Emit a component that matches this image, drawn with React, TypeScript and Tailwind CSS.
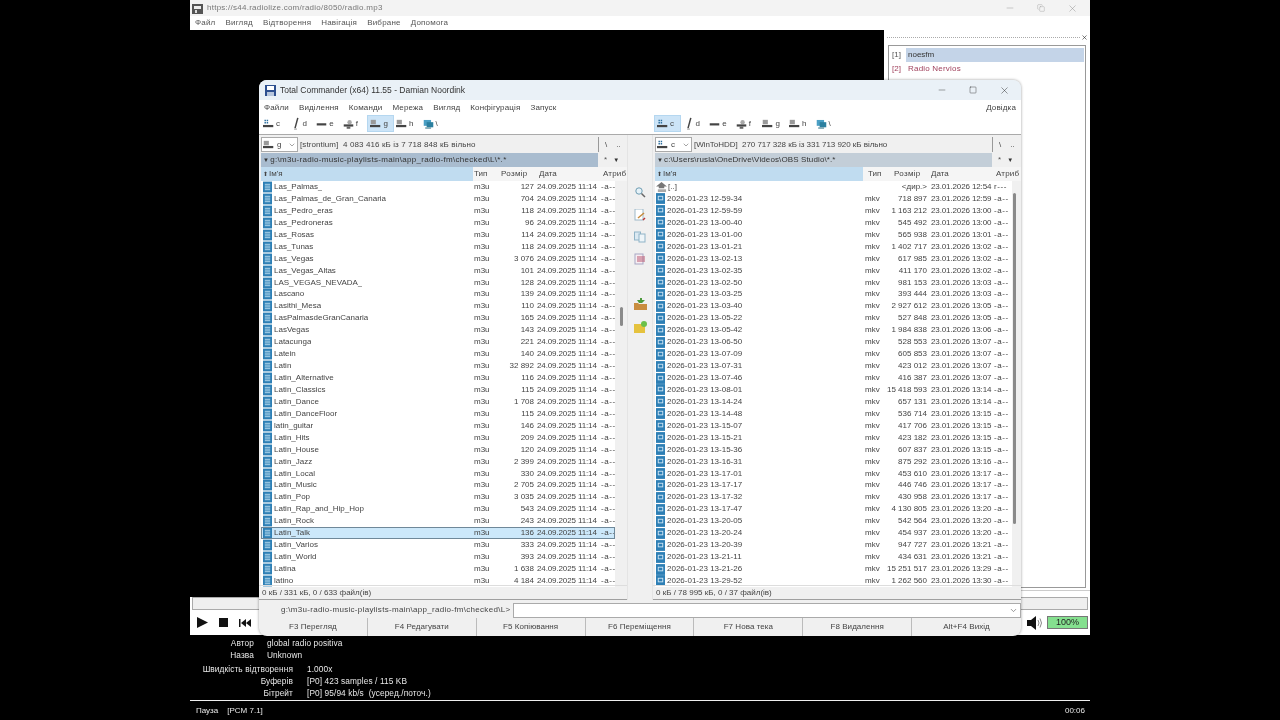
import { Minus, Square, X, ChevronDown, Copy } from "lucide-react";

const LEFT_FILES: [string, string][] = [
  ["Las_Palmas_", "127"],
  ["Las_Palmas_de_Gran_Canaria", "704"],
  ["Las_Pedro_eras", "118"],
  ["Las_Pedroneras", "96"],
  ["Las_Rosas", "114"],
  ["Las_Tunas", "118"],
  ["Las_Vegas", "3 076"],
  ["Las_Vegas_Altas", "101"],
  ["LAS_VEGAS_NEVADA_", "128"],
  ["Lascano", "139"],
  ["Lasithi_Mesa", "110"],
  ["LasPalmasdeGranCanaria", "165"],
  ["LasVegas", "143"],
  ["Latacunga", "221"],
  ["Latein", "140"],
  ["Latin", "32 892"],
  ["Latin_Alternative", "116"],
  ["Latin_Classics", "115"],
  ["Latin_Dance", "1 708"],
  ["Latin_DanceFloor", "115"],
  ["latin_guitar", "146"],
  ["Latin_Hits", "209"],
  ["Latin_House", "120"],
  ["Latin_Jazz", "2 399"],
  ["Latin_Local", "330"],
  ["Latin_Music", "2 705"],
  ["Latin_Pop", "3 035"],
  ["Latin_Rap_and_Hip_Hop", "543"],
  ["Latin_Rock", "243"],
  ["Latin_Talk", "136"],
  ["Latin_Varios", "333"],
  ["Latin_World", "393"],
  ["Latina", "1 638"],
  ["latino", "4 184"],
];

const RIGHT_FILES: [string, string, string][] = [
  ["12-59-34", "718 897", "12:59"],
  ["12-59-59", "1 163 212", "13:00"],
  ["13-00-40", "545 492", "13:00"],
  ["13-01-00", "565 938", "13:01"],
  ["13-01-21", "1 402 717", "13:02"],
  ["13-02-13", "617 985", "13:02"],
  ["13-02-35", "411 170", "13:02"],
  ["13-02-50", "981 153", "13:03"],
  ["13-03-25", "393 444", "13:03"],
  ["13-03-40", "2 927 612", "13:05"],
  ["13-05-22", "527 848", "13:05"],
  ["13-05-42", "1 984 838", "13:06"],
  ["13-06-50", "528 553", "13:07"],
  ["13-07-09", "605 853", "13:07"],
  ["13-07-31", "423 012", "13:07"],
  ["13-07-46", "416 387", "13:07"],
  ["13-08-01", "15 418 593", "13:14"],
  ["13-14-24", "657 131", "13:14"],
  ["13-14-48", "536 714", "13:15"],
  ["13-15-07", "417 706", "13:15"],
  ["13-15-21", "423 182", "13:15"],
  ["13-15-36", "607 837", "13:15"],
  ["13-16-31", "875 292", "13:16"],
  ["13-17-01", "453 610", "13:17"],
  ["13-17-17", "446 746", "13:17"],
  ["13-17-32", "430 958", "13:17"],
  ["13-17-47", "4 130 805", "13:20"],
  ["13-20-05", "542 564", "13:20"],
  ["13-20-24", "454 937", "13:20"],
  ["13-20-39", "947 727", "13:21"],
  ["13-21-11", "434 631", "13:21"],
  ["13-21-26", "15 251 517", "13:29"],
  ["13-29-52", "1 262 560", "13:30"],
];

const FKEYS = ["F3 Перегляд", "F4 Редагувати", "F5 Копіювання", "F6 Переміщення", "F7 Нова тека", "F8 Видалення", "Alt+F4 Вихід"];

function M3uIcon() {
  return (
    <svg width="9" height="12" viewBox="0 0 10 12" className="shrink-0">
      <rect x="0" y="0" width="10" height="12" fill="#2d7fb5" />
      <path d="M2 3h6M2 5h6M2 7h6M2 9h6" stroke="#bfe0f2" strokeWidth="1" />
    </svg>
  );
}

function MkvIcon() {
  return (
    <svg width="9" height="11" viewBox="0 0 10 12" className="shrink-0">
      <rect x="0" y="0" width="10" height="12" fill="#2d7fb5" />
      <rect x="2" y="3" width="6" height="5" fill="#cfe6f5" />
      <rect x="3" y="4" width="4" height="3" fill="#2d7fb5" />
    </svg>
  );
}

function UpIcon() {
  return (
    <svg width="11" height="10" viewBox="0 0 12 11" className="shrink-0">
      <path d="M6 0 12 5H9V7H3V5H0z" fill="#777" />
      <rect x="2" y="8" width="9" height="3" fill="#aaa" />
    </svg>
  );
}

function DriveIcon({ kind }: { kind: string }) {
  if (kind === "d") {
    return (
      <svg width="11" height="13" viewBox="0 0 11 14" className="shrink-0">
        <path d="M8 1 5 12" stroke="#444" strokeWidth="1.6" fill="none" />
        <path d="M4 13h3" stroke="#888" strokeWidth="1" />
      </svg>
    );
  }
  if (kind === "e") {
    return (
      <svg width="11" height="10" viewBox="0 0 15 12" className="shrink-0">
        <rect x="1" y="5" width="13" height="3" fill="#444" />
      </svg>
    );
  }
  if (kind === "f") {
    return (
      <svg width="11" height="10" viewBox="0 0 15 13" className="shrink-0">
        <circle cx="9" cy="4" r="3" fill="#aaa" />
        <rect x="1" y="7" width="13" height="3" fill="#444" />
        <rect x="5" y="10" width="5" height="3" fill="#666" />
      </svg>
    );
  }
  if (kind === "\\") {
    return (
      <svg width="11" height="10" viewBox="0 0 15 13" className="shrink-0">
        <rect x="1" y="1" width="10" height="8" fill="#4a9fc4" />
        <rect x="5" y="4" width="9" height="7" fill="#2b7f9f" />
        <rect x="3" y="11" width="8" height="2" fill="#6a9aa8" />
      </svg>
    );
  }
  if (kind === "c") {
    return (
      <svg width="11" height="9" viewBox="0 0 15 12" className="shrink-0">
        <path d="M2 1h2v2H2zM5 1h2v2H5zM2 4h2v2H2zM5 4h2v2H5z" fill="#2d6f9f" />
        <rect x="0" y="8" width="14" height="3" fill="#444" />
      </svg>
    );
  }
  return (
    <svg width="11" height="9" viewBox="0 0 15 12" className="shrink-0">
      <rect x="1" y="1" width="7" height="6" fill="#999" />
      <rect x="0" y="8" width="14" height="3" fill="#444" />
    </svg>
  );
}

function DriveBar({ active, offsets }: { active: string; offsets: string }) {
  const drives = ["c", "d", "e", "f", "g", "h", "\\"];
  return (
    <div className={`flex items-center h-[20px] w-[381px] pb-[2px] ${offsets}`}>
      {drives.map((d) => (
        <div
          key={d}
          className={`flex items-center gap-[2px] h-[17px] w-[26.6px] shrink-0 pl-[2px] text-[8px] text-[#444] ${
            d === active ? "bg-[#cce4f7] border border-[#b5d7f0]" : ""
          }`}
        >
          <DriveIcon kind={d} />
          <span>{d}</span>
        </div>
      ))}
    </div>
  );
}

function PanelTop({
  drive,
  info,
  path,
  dim,
  infoTrack,
  pathTrack,
}: {
  drive: string;
  info: string;
  path: string;
  dim?: boolean;
  infoTrack: string;
  pathTrack: string;
}) {
  return (
    <>
      <div className="flex items-center h-[17px] pl-[2px] text-[8px] text-[#444]">
        <div className="flex items-center gap-[3px] h-[15px] w-[37px] shrink-0 pl-[1px] bg-white border border-[#aaa]">
          <DriveIcon kind={drive} />
          <span>{drive}</span>
          <ChevronDown size={8} className="ml-auto mr-[1px] text-[#777]" />
        </div>
        <span className={`ml-[2px] whitespace-pre ${infoTrack}`}>{info}</span>
        <div className="ml-auto flex items-center gap-[9px] h-[15px] w-[29px] pl-[6px] border-l border-[#999]">
          <span>\</span>
          <span>..</span>
        </div>
      </div>
      <div className="flex items-center h-[14px] pl-[2px]">
        <div
          className={`flex items-center h-[14px] w-[337px] pl-[2px] text-[8px] text-[#333] whitespace-nowrap ${pathTrack} ${
            dim ? "bg-[#c3ced8]" : "bg-[#a9bccf]"
          }`}
        >
          <span className="text-[6px] mr-[1px]">▼</span>
          {path}
        </div>
        <span className="ml-[6px] text-[8px] text-[#555]">*</span>
        <span className="ml-[6px] text-[6px] text-[#333]">▼</span>
      </div>
    </>
  );
}

function LeftPanel() {
  return (
    <div className="w-[368px] h-[465px] pt-[1px] flex flex-col shrink-0 border-b border-[#a0a0a0]">
      <PanelTop
        drive="g"
        infoTrack="tracking-[0.1px]"
        pathTrack="tracking-[0.3px]"
        info="[strontium]  4 083 416 кБ із 7 718 848 кБ вільно"
        path="g:\m3u-radio-music-playlists-main\app_radio-fm\checked\L\*.*"
      />
      <div className="grid grid-cols-[212px_28px_38px_64px_1fr] items-center h-[14px] ml-[2px] text-[8px] text-[#444] bg-[#f5f5f5]">
        <div className="h-full flex items-center bg-[#c0dcf0] pl-[2px]"><span className="text-[6px] mr-[1px]">⬆</span>Ім'я</div>
        <span className="pl-[1px]">Тип</span>
        <span className="tracking-[0.3px]">Розмір</span>
        <span>Дата</span>
        <span className="tracking-[0.2px]">Атриб</span>
      </div>
      <div className="flex flex-1 min-h-0 ml-[2px]">
        <div className="w-[354px] h-[406px] bg-white flex flex-col overflow-hidden">
          {LEFT_FILES.map(([name, size]) => {
            const selected = name === "Latin_Talk";
            return (
              <div
                key={name}
                className={`grid grid-cols-[212px_28px_33px_67px_1fr] items-center h-[11.95px] shrink-0 text-[8px] text-[#444] ${
                  selected ? "bg-[#cce8fa] outline outline-1 -outline-offset-1 outline-[#6f8899]" : ""
                }`}
              >
                <div className="flex items-center gap-[2px] pl-[2px]">
                  <M3uIcon />
                  <span className="whitespace-nowrap overflow-hidden">{name}</span>
                </div>
                <span className="pl-[1px]">m3u</span>
                <span className="text-right whitespace-nowrap">{size}</span>
                <span className="pl-[3px] tracking-[-0.12px] whitespace-nowrap">24.09.2025 11:14</span>
                <span className="tracking-[0.6px] whitespace-nowrap">-a--</span>
              </div>
            );
          })}
        </div>
        <div className="w-[12px] h-[406px] bg-[#f0f0f0] flex flex-col pt-[126px] pl-[5px]">
          <div className="w-[3px] h-[19px] bg-[#8a8a8a] rounded-sm" />
        </div>
      </div>
      <div className="h-[14px] flex items-center pl-[3px] text-[8px] text-[#444] border-t border-[#ddd]">0 кБ / 331 кБ, 0 / 633 файл(ів)</div>
    </div>
  );
}

function RightPanel() {
  return (
    <div className="w-[368px] h-[465px] pt-[1px] flex flex-col shrink-0 border-b border-[#a0a0a0]">
      <PanelTop
        drive="c"
        dim
        infoTrack="tracking-[-0.04px]"
        pathTrack="tracking-[0.12px]"
        info="[WinToHDD]  270 717 328 кБ із 331 713 920 кБ вільно"
        path="c:\Users\rusla\OneDrive\Videos\OBS Studio\*.*"
      />
      <div className="grid grid-cols-[208px_31px_37px_65px_1fr] items-center h-[14px] ml-[2px] text-[8px] text-[#444] bg-[#f5f5f5]">
        <div className="h-full flex items-center bg-[#c0dcf0] pl-[2px]"><span className="text-[6px] mr-[1px]">⬆</span>Ім'я</div>
        <span className="pl-[5px]">Тип</span>
        <span className="tracking-[0.3px]">Розмір</span>
        <span>Дата</span>
        <span className="tracking-[0.2px]">Атриб</span>
      </div>
      <div className="flex flex-1 min-h-0 ml-[2px]">
        <div className="w-[357px] h-[406px] bg-white flex flex-col overflow-hidden">
          <div className="grid grid-cols-[210px_28px_34px_67px_1fr] items-center h-[11.95px] shrink-0 text-[8px] text-[#444]">
            <div className="flex items-center gap-[1px] pl-[1px]">
              <UpIcon />
              <span>[..]</span>
            </div>
            <span />
            <span className="text-right whitespace-nowrap">&lt;дир.&gt;</span>
            <span className="pl-[4px] tracking-[-0.12px] whitespace-nowrap">23.01.2026 12:54</span>
            <span className="tracking-[0.6px] whitespace-nowrap">r---</span>
          </div>
          {RIGHT_FILES.map(([name, size, time]) => (
            <div
              key={name}
              className="grid grid-cols-[210px_28px_34px_67px_1fr] items-center h-[11.95px] shrink-0 text-[8px] text-[#444]"
            >
              <div className="flex items-center gap-[2px] pl-[1px]">
                <MkvIcon />
                <span className="whitespace-nowrap overflow-hidden">2026-01-23 {name}</span>
              </div>
              <span>mkv</span>
              <span className="text-right whitespace-nowrap justify-self-end">{size}</span>
              <span className="pl-[4px] tracking-[-0.12px] whitespace-nowrap">23.01.2026 {time}</span>
              <span className="tracking-[0.6px] whitespace-nowrap">-a--</span>
            </div>
          ))}
        </div>
        <div className="w-[9px] h-[406px] bg-[#f0f0f0] flex flex-col pt-[12px] pl-[1px]">
          <div className="w-[3px] h-[331px] bg-[#8a8a8a] rounded-sm" />
        </div>
      </div>
      <div className="h-[14px] flex items-center pl-[3px] text-[8px] text-[#444] border-t border-[#ddd]">0 кБ / 78 995 кБ, 0 / 37 файл(ів)</div>
    </div>
  );
}

function CenterTools() {
  return (
    <div className="w-[26px] h-[465px] shrink-0 flex flex-col items-center pt-[51px] border-x border-[#e4e4e4]">
      <svg width="12" height="12" viewBox="0 0 12 12">
        <circle cx="5" cy="5" r="3.2" fill="#e6f2f8" stroke="#6f9db3" />
        <path d="M7.5 7.5 11 11" stroke="#666" strokeWidth="1.500" />
      </svg>
      <svg width="12" height="12" viewBox="0 0 12 12" className="mt-[11px]">
        <rect x="1" y="0" width="8" height="11" fill="#fff" stroke="#9db8c8" />
        <path d="M4 9 10 4" stroke="#c78a3b" strokeWidth="1.500" />
        <path d="M9 11 11 9" stroke="#b33" strokeWidth="1.500" />
      </svg>
      <svg width="12" height="12" viewBox="0 0 12 12" className="mt-[10px]">
        <rect x="0.5" y="1" width="6" height="8" fill="#dbe9f2" stroke="#8fb3c7" />
        <rect x="5" y="3" width="6" height="8" fill="#eef5f9" stroke="#8fb3c7" />
      </svg>
      <svg width="12" height="12" viewBox="0 0 12 12" className="mt-[10px]">
        <rect x="1" y="1" width="8" height="10" fill="#f7eef2" stroke="#a7a7c4" />
        <path d="M3 4h8M3 6h8M3 8h8" stroke="#b9546e" />
      </svg>
      <svg width="13" height="12" viewBox="0 0 13 12" className="mt-[33px]">
        <path d="M0 5h4l1 1h8v6H0z" fill="#c98d3f" />
        <path d="M5 5 3 2h3V0h2v2h3L8 5z" fill="#4c9a3c" />
      </svg>
      <svg width="13" height="12" viewBox="0 0 13 12" className="mt-[11px]">
        <rect x="0" y="3" width="11" height="9" fill="#e5c23e" />
        <circle cx="10" cy="3" r="3" fill="#6cc04a" />
      </svg>
    </div>
  );
}

function TotalCommander() {
  return (
    <div className="absolute left-[259px] top-[80px] w-[762px] h-[556px] bg-[#f0f0f0] rounded-lg overflow-hidden flex flex-col shadow-[0_0_3px_rgba(0,0,0,0.4)]">
      <div className="flex items-center h-[20px] bg-[#eaf1f7] pl-[6px]">
        <svg width="11" height="11" viewBox="0 0 11 11">
          <rect x="0" y="0" width="11" height="11" fill="#2d4f8f" />
          <rect x="2" y="1" width="7" height="4" fill="#fff" />
          <rect x="2" y="7" width="7" height="4" fill="#b7c6dd" />
        </svg>
        <span className="ml-[4px] text-[8.5px] text-[#333]">Total Commander (x64) 11.55 - Damian Noordink</span>
        <div className="ml-auto flex items-center text-[#222] pr-[11px] gap-[22px]">
          <Minus size={10} strokeWidth={1} />
          <Square size={8} strokeWidth={1.2} />
          <X size={11} strokeWidth={1} />
        </div>
      </div>
      <div className="flex items-center h-[15px] bg-white pl-[5px] pr-[5px] text-[8px] text-[#444] gap-[10px] tracking-[0.15px]">
        <span>Файли</span>
        <span>Виділення</span>
        <span>Команди</span>
        <span>Мережа</span>
        <span>Вигляд</span>
        <span>Конфігурація</span>
        <span>Запуск</span>
        <span className="ml-auto">Довідка</span>
      </div>
      <div className="flex items-center h-[20px] bg-white border-b border-[#aaa]">
        <DriveBar active="g" offsets="pl-[2px]" />
        <DriveBar active="c" offsets="pl-[14px]" />
      </div>
      <div className="flex flex-1 min-h-0 items-start">
        <LeftPanel />
        <CenterTools />
        <RightPanel />
      </div>
      <div className="absolute left-0 right-0 top-[522px] h-[16px] flex items-center bg-[#f0f0f0] text-[8px] text-[#444]">
        <span className="w-[254px] shrink-0 pl-[22px] tracking-[0.3px] whitespace-nowrap">g:\m3u-radio-music-playlists-main\app_radio-fm\checked\L&gt;</span>
        <div className="flex-1 h-[15px] bg-white border border-[#aaa] flex items-center justify-end pr-[2px]">
          <ChevronDown size={9} className="text-[#777]" />
        </div>
      </div>
      <div className="absolute left-0 right-0 bottom-0 h-[18px] grid grid-cols-7 text-[8px] text-[#444]">
        {FKEYS.map((k, i) => (
          <div key={k} className={`flex items-center justify-center tracking-[0.05px] ${i < 6 ? "border-r border-[#bbb]" : ""}`}>
            {k}
          </div>
        ))}
      </div>
    </div>
  );
}

export default function App() {
  return (
    <div className="relative w-[1280px] h-[720px] bg-black overflow-hidden font-['Liberation_Sans',sans-serif] blur-[0.3px]">
      <div className="ml-[190px] w-[900px] h-[720px] flex flex-col">
        <div className="flex items-center h-[16px] shrink-0 bg-[#f3f3f3] pl-[2px]">
          <svg width="11" height="11" viewBox="0 0 11 11">
            <rect x="0" y="1" width="11" height="10" fill="#555" />
            <rect x="2" y="3" width="7" height="3" fill="#eee" />
            <rect x="3" y="7" width="2" height="3" fill="#ddd" />
          </svg>
          <span className="ml-[4px] text-[8px] text-[#777] tracking-[0.25px]">https://s44.radiolize.com/radio/8050/radio.mp3</span>
          <div className="ml-auto flex items-center text-[#888] pr-[12px] gap-[22px]">
            <Minus size={10} strokeWidth={1} />
            <Copy size={8} strokeWidth={1} />
            <X size={11} strokeWidth={1} />
          </div>
        </div>
        <div className="flex items-center h-[14px] shrink-0 bg-white pl-[5px] gap-[10px] text-[8px] text-[#555] tracking-[0.2px]">
          <span>Файл</span>
          <span>Вигляд</span>
          <span>Відтворення</span>
          <span>Навігація</span>
          <span>Вибране</span>
          <span>Допомога</span>
        </div>
        <div className="flex flex-1 min-h-0">
          <div className="flex-1 bg-black" />
          <div className="w-[206px] h-full bg-white flex flex-col pt-[3px]">
            <div className="flex items-center h-[9px] pl-[3px] pr-[2px]">
              <div className="flex-1 border-t border-dotted border-[#aaa]" />
              <X size={7} strokeWidth={2} className="ml-[1px] text-[#222]" />
            </div>
            <div className="ml-[4px] mt-[3px] w-[198px] h-[543px] border border-[#999] pt-[2px] pl-[3px] text-[8px]">
              <div className="flex items-center h-[14px]">
                <span className="w-[14px] text-[#555]">[1]</span>
                <span className="w-[178px] h-full bg-[#c4d4e8] flex items-center pl-[2px] text-[#333]">noesfm</span>
              </div>
              <div className="flex items-center h-[14px] text-[#a0405c]">
                <span className="w-[14px]">[2]</span>
                <span className="pl-[2px] tracking-[0.2px]">Radio Nervios</span>
              </div>
            </div>
            <div className="mt-[2px] border-t border-[#ccc]" />
          </div>
        </div>
        <div className="h-[38px] shrink-0 bg-white flex flex-col">
          <div className="mx-[2px] h-[13px] bg-[#efefef] border border-[#aaa]" />
          <div className="flex items-center flex-1 pl-[7px] pr-[2px]">
            <svg width="11" height="11" viewBox="0 0 11 11"><path d="M0 0 11 5.5 0 11z" fill="#111" /></svg>
            <div className="ml-[11px] w-[9px] h-[9px] bg-[#111]" />
            <svg width="12" height="8" viewBox="0 0 12 8" className="ml-[11px]">
              <path d="M0 0h1.500v8H0zM7 0v8L2 4zM12 0v8L7 4z" fill="#111" />
            </svg>
            <svg width="16" height="14" viewBox="0 0 16 14" className="ml-auto mr-[4px]">
              <path d="M0 4h4l5-4v14L4 10H0z" fill="#111" />
              <path d="M11 4q2 3 0 6M13 2.500q3 4.500 0 9" stroke="#888" fill="none" />
            </svg>
            <div className="w-[41px] h-[13px] bg-[#85e08f] border border-[#777] flex items-center justify-center text-[9px] text-[#222]">100%</div>
          </div>
        </div>
        <div className="h-[65px] shrink-0 pt-[2px] text-[8.3px] tracking-[0.1px] text-[#e8e8e8]">
          <div className="flex items-center h-[12px]"><span className="w-[64px] text-right">Автор</span><span className="ml-[13px]">global radio positiva</span></div>
          <div className="flex items-center h-[12px]"><span className="w-[64px] text-right">Назва</span><span className="ml-[13px]">Unknown</span></div>
          <div className="flex items-center h-[12px] mt-[2px]"><span className="w-[103px] text-right whitespace-nowrap">Швидкість відтворення</span><span className="ml-[14px]">1.000x</span></div>
          <div className="flex items-center h-[12px]"><span className="w-[103px] text-right">Буферів</span><span className="ml-[14px]">[P0] 423 samples / 115 KB</span></div>
          <div className="flex items-center h-[12px]"><span className="w-[103px] text-right">Бітрейт</span><span className="ml-[14px] whitespace-pre">[P0] 95/94 kb/s  (усеред./поточ.)</span></div>
        </div>
        <div className="flex items-center h-[20px] shrink-0 border-t border-[#eee] pl-[6px] pr-[5px] text-[8px] text-[#e8e8e8]">
          <span>Пауза</span>
          <span className="ml-[9px]">[PCM 7.1]</span>
          <span className="ml-auto">00:06</span>
        </div>
      </div>
      <TotalCommander />
    </div>
  );
}
